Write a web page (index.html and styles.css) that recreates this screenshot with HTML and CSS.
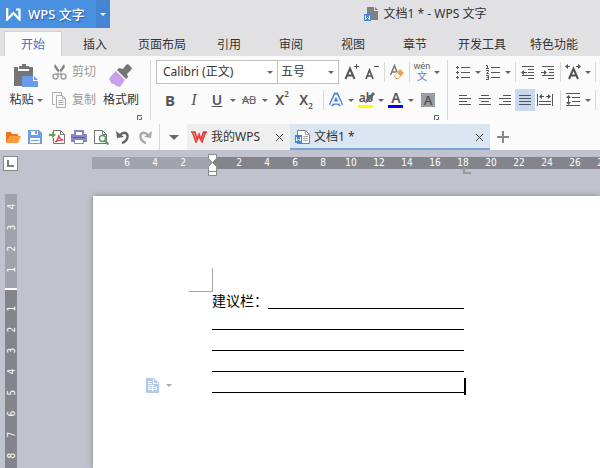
FILE: index.html
```html
<!DOCTYPE html>
<html lang="zh-CN">
<head>
<meta charset="utf-8">
<title>文档1 * - WPS 文字</title>
<link rel="stylesheet" href="styles.css">
</head>
<body>
<header class="titlebar">
  <div class="brand">
    <button class="brand-main" type="button">
      <svg width="15" height="13" viewBox="0 0 15 13"><path d="M1.200 0v11.500L7.500 5l6 6.500V1.500H10" fill="none" stroke="#fff" stroke-width="2.200"/></svg>
      <span>WPS 文字</span>
    </button>
    <button class="brand-drop" type="button" aria-label="菜单"><i class="arrow"></i></button>
  </div>
  <div class="caption">
    <svg width="14" height="14" viewBox="0 0 14 14"><path d="M3 0h7v4h4v9H3z" fill="#808080"/><path d="M11 0l3 3h-3z" fill="#808080"/><path d="M0 7h7v7H0z" fill="#3f86d8"/><path d="M1.500 8.500v4l2-2 2 2v-4" fill="none" stroke="#fff"/></svg>
    <span>文档1 * - WPS 文字</span>
  </div>
</header>

<nav class="tabs">
  <button class="tab active" type="button">开始</button>
  <button class="tab" type="button">插入</button>
  <button class="tab long" type="button">页面布局</button>
  <button class="tab" type="button">引用</button>
  <button class="tab" type="button">审阅</button>
  <button class="tab" type="button">视图</button>
  <button class="tab" type="button">章节</button>
  <button class="tab long" type="button">开发工具</button>
  <button class="tab long" type="button">特色功能</button>
</nav>

<section class="ribbon">
  <div class="group clipboard">
    <button class="big" type="button">
      <svg width="24" height="24" viewBox="0 0 24 24"><path d="M0 3h4v4h11V3h4v9H8v10H0z" fill="#757575"/><path d="M5 2h3V0h4v2h3v3H5z" fill="#757575"/><path d="M8 12h11v5h5v6H8z" fill="#6b9be8"/><path d="M20 12l4 4h-4z" fill="#6b9be8"/></svg>
      <span>粘贴 <i class="arrow"></i></span>
    </button>
    <div class="stack">
      <button class="small" type="button">
        <svg width="15" height="16" viewBox="0 0 15 16"><g fill="none" stroke="#a3a3a3" stroke-width="1.500"><circle cx="3.500" cy="12.500" r="2.500"/><circle cx="11.500" cy="12.500" r="2.500"/></g><path d="M3 0l7 10-2 1-6-8zM12 0L5 10l2 1 6-8z" fill="#858585"/></svg>
        <span>剪切</span>
      </button>
      <button class="small" type="button">
        <svg width="15" height="16" viewBox="0 0 15 16"><g fill="none" stroke="#adadad"><path d="M3 12.500H.5V.5h9V3"/><path d="M4.500 3.500h6l3 3v9h-9zM10.500 3.500v3h3M6.500 8.500h5M6.500 10.500h5M6.500 12.500h5"/></g></svg>
        <span>复制</span>
      </button>
    </div>
    <button class="big painter" type="button">
      <svg width="24" height="24" viewBox="0 0 24 24"><path d="M17 1l2-1 4 4-1 2-4 4 1 3-2 2L8 6l2-2 4 1z" fill="#757575"/><path d="M7 7l9 9-5 7-4-1-2-2-2 0-3-5 3-4z" fill="#c9a0ee"/></svg>
      <span>格式刷</span>
    </button>
    <button class="launcher" type="button" aria-label="剪贴板设置"><svg width="5" height="5" viewBox="0 0 5 5"><path d="M.5 5V.5H5M4.500 2v2.500H2" fill="none" stroke="#56668c"/></svg></button>
  </div>

  <div class="group font">
    <div class="row">
      <div class="combo family"><select aria-label="字体"><option>Calibri (正文)</option></select><i class="arrow"></i></div>
      <div class="combo size"><select aria-label="字号"><option>五号</option></select><i class="arrow"></i></div>
      <button class="tool" type="button" aria-label="增大字号"><svg width="16" height="16" viewBox="0 0 16 16"><path d="M1.500 15L6 4.500 10.500 15M3 11.500h6" fill="none" stroke="#555" stroke-width="2"/><path d="M10 2.500h5M12.500 0v5" stroke="#555"/></svg></button>
      <button class="tool" type="button" aria-label="减小字号"><svg width="16" height="16" viewBox="0 0 16 16"><path d="M2 15L5.500 6 9 15M3 12h5" fill="none" stroke="#555" stroke-width="1.700"/><path d="M10 2.500h5" stroke="#555"/></svg></button>
      <i class="sep"></i>
      <button class="tool" type="button" aria-label="清除格式"><svg width="16" height="16" viewBox="0 0 16 16"><path d="M1.500 11L5.500 1.500 8 8M3 8h4" fill="none" stroke="#777" stroke-width="1.500"/><path d="M11 5l4 4-6 6H7l-2-3z" fill="#f0a04b"/><path d="M8 9l3 3-2 2H7.500L6 12z" fill="#fff"/></svg></button>
      <i class="sep"></i>
      <button class="tool pinyin-guide" type="button" aria-label="拼音指南"><span class="pinyin">wén</span><span class="hanzi">文</span></button>
      <button class="drop" type="button" aria-label="拼音选项"><i class="arrow"></i></button>
    </div>
    <div class="row second">
      <button class="tool w24 bold" type="button">B</button>
      <button class="tool w24 italic" type="button">I</button>
      <button class="tool w22 underline" type="button">U</button>
      <button class="drop" type="button" aria-label="下划线选项"><i class="arrow"></i></button>
      <button class="tool w22 strike" type="button">AB</button>
      <button class="drop" type="button" aria-label="删除线选项"><i class="arrow"></i></button>
      <button class="tool w24 script" type="button">X<sup>2</sup></button>
      <button class="tool w24 script" type="button">X<sub>2</sub></button>
      <i class="sep wide"></i>
      <button class="tool" type="button" aria-label="文字效果"><svg width="16" height="16" viewBox="0 0 16 16"><path d="M3 13.500L7.500 3h1L13 13.500M5 10.500h6" fill="none" stroke="#4179d3" stroke-width="4.500"/><path d="M3 13L7.500 3.500h1L13 13M5 10.500h6" fill="none" stroke="#fff" stroke-width="1.800"/></svg></button>
      <button class="drop" type="button" aria-label="文字效果选项"><i class="arrow"></i></button>
      <button class="tool swatch yellow" type="button" aria-label="突出显示"><span>ab</span><svg class="pen" width="10" height="11" viewBox="0 0 10 11"><path d="M8 0l2 2-6 7-3 2H0l1-3z" fill="#666"/></svg></button>
      <button class="drop" type="button" aria-label="突出显示颜色"><i class="arrow"></i></button>
      <button class="tool swatch blue" type="button">A</button>
      <button class="drop" type="button" aria-label="字体颜色选项"><i class="arrow"></i></button>
      <button class="tool w24 shade" type="button"><span>A</span></button>
    </div>
    <button class="launcher" type="button" aria-label="字体设置"><svg width="5" height="5" viewBox="0 0 5 5"><path d="M.5 5V.5H5M4.500 2v2.500H2" fill="none" stroke="#56668c"/></svg></button>
  </div>

  <div class="group para">
    <div class="row">
      <button class="tool" type="button" aria-label="项目符号"><svg width="16" height="16" viewBox="0 0 16 16"><path d="M6 3.500h9M6 8.500h9M6 13.500h9M1 3.500h3M1 8.500h3M1 13.500h3M2.500 2v3M2.500 7v3M2.500 12v3" stroke="#555"/></svg></button>
      <button class="drop" type="button" aria-label="项目符号选项"><i class="arrow"></i></button>
      <button class="tool" type="button" aria-label="编号"><svg width="16" height="16" viewBox="0 0 16 16"><path d="M6 3.500h9M6 8.500h9M6 13.500h9M1 1.500h1.500V5M1 4.500h3M1 6.500h2.500v1L1.500 9.500H4M1 11.500h2.500v4H1M1.500 13.500h2" fill="none" stroke="#555"/></svg></button>
      <button class="drop" type="button" aria-label="编号选项"><i class="arrow"></i></button>
      <i class="sep"></i>
      <button class="tool" type="button" aria-label="减少缩进"><svg width="16" height="16" viewBox="0 0 16 16"><path d="M2 2.500h12M8 5.500h6M8 8.500h6M2 11.500h12M8 14.500h6M2 8.500h5" stroke="#555"/><path d="M1 8.500L4 6v5z" fill="#555"/></svg></button>
      <button class="tool" type="button" aria-label="增加缩进"><svg width="16" height="16" viewBox="0 0 16 16"><path d="M2 2.500h12M8 5.500h6M9 8.500h5M2 11.500h12M8 14.500h6M1 8.500h5" stroke="#555"/><path d="M7 8.500L4 6v5z" fill="#555"/></svg></button>
      <i class="sep"></i>
      <button class="tool" type="button" aria-label="字符缩放"><svg width="16" height="16" viewBox="0 0 16 16"><path d="M4 15L8.500 4.500 13 15M5.500 11.500h6" fill="none" stroke="#555" stroke-width="2"/><path d="M1 2.500h4M11 2.500h4" stroke="#555"/><path d="M0 2.500L3 0v5zM16 2.500L13 0v5z" fill="#555"/></svg></button>
      <button class="drop" type="button" aria-label="字符缩放选项"><i class="arrow"></i></button>
      <i class="sep"></i>
    </div>
    <div class="row second">
      <button class="tool" type="button" aria-label="左对齐"><svg width="12" height="12" viewBox="0 0 12 12"><path d="M0 1.500h8M0 4.500h12M0 7.500h8M0 10.500h12" stroke="#555"/></svg></button>
      <button class="tool" type="button" aria-label="居中"><svg width="12" height="12" viewBox="0 0 12 12"><path d="M2 1.500h8M0 4.500h12M2 7.500h8M0 10.500h12" stroke="#555"/></svg></button>
      <button class="tool" type="button" aria-label="右对齐"><svg width="12" height="12" viewBox="0 0 12 12"><path d="M4 1.500h8M0 4.500h12M4 7.500h8M0 10.500h12" stroke="#555"/></svg></button>
      <button class="tool on" type="button" aria-label="两端对齐"><svg width="12" height="12" viewBox="0 0 12 12"><path d="M0 1.500h12M0 4.500h12M0 7.500h12M0 10.500h12" stroke="#555"/></svg></button>
      <button class="tool" type="button" aria-label="分散对齐"><svg width="16" height="12" viewBox="0 0 16 12"><path d="M.5 0v12M15.500 0v12M3 2.500h10M2 7.500h12M2 10.500h12" stroke="#555"/><path d="M2 2.500L5 0v5zM14 2.500L11 0v5z" fill="#555"/><path d="M7 2.500h2" stroke="#fbfbfb"/></svg></button>
      <i class="sep push"></i>
      <button class="tool" type="button" aria-label="行距"><svg width="16" height="14" viewBox="0 0 16 14"><path d="M1 .5h14M7 4.500h8M7 8.500h8M1 12.500h14M3.500 4v6" stroke="#555"/><path d="M3.500 2L6 5H1zM3.500 12L6 9H1z" fill="#555"/></svg></button>
      <button class="drop" type="button" aria-label="行距选项"><i class="arrow"></i></button>
      <i class="sep"></i>
    </div>
  </div>
</section>

<div class="docbar">
  <div class="quick">
    <button type="button" aria-label="打开"><svg width="16" height="16" viewBox="0 0 16 16"><path d="M1 13V3h5l1 2h6v2H5L2 13z" fill="#e8761c"/><path d="M5 7h11l-3 7H1z" fill="#ff9a3c"/></svg></button>
    <button type="button" aria-label="保存"><svg width="16" height="16" viewBox="0 0 16 16"><path d="M1 1h11l3 3v11H1z" fill="#6c9fe6"/><path d="M4 2h7v4H4zM3 9h10v5H3z" fill="#fff"/><path d="M8 2h2v3H8z" fill="#6c9fe6"/><path d="M4 11.500h8" stroke="#6c9fe6"/></svg></button>
    <button type="button" aria-label="输出为PDF"><svg width="16" height="16" viewBox="0 0 16 16"><path d="M4.500 4V1.500h7l4 4v9h-11V9M11.500 1.500v4h4" fill="#fff" stroke="#777"/><path d="M0 5h3V2.500L7 6 3 9V7H0z" fill="#63a053"/><path d="M6 13c2-1 4-4 3.500-7 1 4 3 5 5 5-3 0-6 .5-8.500 2z" fill="none" stroke="#e0393e" stroke-width="1.200"/></svg></button>
    <button type="button" aria-label="打印"><svg width="16" height="16" viewBox="0 0 16 16"><path d="M3 1h10v4H3zM0 5h16v8H0z" fill="#8a84c8"/><path d="M5 3h6v3H5z" fill="#fff"/><path d="M2 8.500h12" stroke="#5d5798"/><path d="M3.500 10.500h9v4h-9z" fill="#fff" stroke="#8a84c8"/></svg></button>
    <button type="button" aria-label="打印预览"><svg width="16" height="16" viewBox="0 0 16 16"><path d="M1.500 1.500h8l4 4v9h-12zM9.500 1.500v4h4" fill="#fff" stroke="#777"/><circle cx="9.500" cy="9.500" r="3" fill="#fff" stroke="#57a05a" stroke-width="1.500"/><path d="M11.500 11.500l4 4" stroke="#57a05a" stroke-width="2"/></svg></button>
    <button type="button" aria-label="撤销"><svg width="16" height="16" viewBox="0 0 16 16"><path d="M5 6c4-4 8-2 7.500 2-.5 3-2.500 5-5.500 6" fill="none" stroke="#666" stroke-width="2.400"/><path d="M1 2l1 7 7-1z" fill="#666"/></svg></button>
    <button type="button" aria-label="恢复"><svg width="16" height="16" viewBox="0 0 16 16"><path d="M11 6C7 2 3 4 3.500 8c.5 3 2.500 5 5.500 6" fill="none" stroke="#aaa" stroke-width="2.400"/><path d="M15 2l-1 7-7-1z" fill="#aaa"/></svg></button>
  </div>
  <button class="more" type="button" aria-label="更多命令"><i class="arrow large"></i></button>
  <div class="doc home">
    <svg width="16" height="12" viewBox="0 0 16 12"><path d="M0 1.200h4l2 7 2-5 2 5 2.500-7H16M1.500 1l3.500 10 3-6 3 6L14.500 1" fill="none" stroke="#e64340" stroke-width="1.700"/></svg>
    <span>我的WPS</span>
    <button class="close" type="button" aria-label="关闭"><svg width="9" height="9" viewBox="0 0 9 9"><path d="M1 1l7 7M8 1L1 8" stroke="#444"/></svg></button>
  </div>
  <div class="doc current">
    <svg width="15" height="15" viewBox="0 0 15 15"><path d="M2.500.5h8l4 4v9h-12z" fill="#fff" stroke="#808080"/><path d="M10.500 1v3.500h4M8 6.500h5M8 8.500h5M8 10.500h5" fill="none" stroke="#aaa"/><path d="M0 5h7v8H0z" fill="#3f86d8"/><path d="M1.500 7v4l2-2 2 2V7" fill="none" stroke="#fff"/></svg>
    <span>文档1 *</span>
    <button class="close" type="button" aria-label="关闭"><svg width="9" height="9" viewBox="0 0 9 9"><path d="M1 1l7 7M8 1L1 8" stroke="#444"/></svg></button>
  </div>
  <button class="add" type="button" aria-label="新建"><svg width="12" height="12" viewBox="0 0 12 12"><path d="M0 6h12M6 0v12" stroke="#888" stroke-width="2"/></svg></button>
</div>

<main class="work">
  <div class="top">
    <button class="corner" type="button" aria-label="制表符"><svg width="7" height="7" viewBox="0 0 7 7"><path d="M1 0v6h6" fill="none" stroke="#808080" stroke-width="2"/></svg></button>
    <div class="hruler">
      <div class="margin-part"><span>6</span><span>4</span><span>2</span></div>
      <div class="body-part">
        <svg class="indent" width="9" height="22" viewBox="0 0 9 22"><path d="M.5.5h8v4l-4 4-4-4z" fill="#fff" stroke="#888"/><path d="M4.500 8.500l4 4v9h-8v-9z" fill="#fff" stroke="#888"/><path d="M1 17.500h7" stroke="#888"/></svg>
        <span>2</span><span>4</span><span>6</span><span>8</span><span>10</span><span>12</span><span>14</span><span>16</span><span class="stop">18</span><span>20</span><span>22</span><span>24</span><span>26</span><span>28</span>
      </div>
    </div>
  </div>
  <div class="canvas">
    <div class="vruler">
      <div class="margin-part"><span>4</span><span>3</span><span>2</span><span>1</span></div>
      <div class="body-part"><span>1</span><span>2</span><span>3</span><span>4</span><span>5</span><span>6</span><span>7</span><span>8</span></div>
    </div>
    <article class="page">
      <div class="crop"></div>
      <div class="lines">
        <p><span>建议栏：</span><u></u></p>
        <p><u></u></p>
        <p><u></u></p>
        <p><u></u></p>
        <p><u></u><i class="caret"></i>
          <button class="options" type="button" aria-label="粘贴选项"><svg width="13" height="15" viewBox="0 0 13 15"><path d="M0 0h8l5 5v10H0z" fill="#b4caea"/><path d="M7.500 1v4.500H12M2 3.500h4M2 5.500h4M2 7.500h6M2.500 9.500h8v2h-8zM6.500 8v5" fill="none" stroke="#fff"/></svg><i class="arrow"></i></button>
        </p>
      </div>
    </article>
  </div>
</main>
</body>
</html>
```

FILE: styles.css
```css
* { box-sizing: border-box; }

body {
  margin: 0;
  height: 100vh;
  display: flex;
  flex-direction: column;
  overflow: hidden;
  background: #e1e1e4;
  color: #333;
  font: 12px/16px "Noto Sans", "Noto Sans CJK SC", sans-serif;
}

button {
  margin: 0;
  padding: 0;
  border: 0;
  background: none;
  color: inherit;
  font: inherit;
  white-space: nowrap;
}

svg { display: block; flex: none; }

.arrow {
  display: inline-block;
  flex: none;
  border: 3px solid transparent;
  border-top-color: #666;
  border-bottom: 0;
}
.arrow.large { border-width: 5px 5px 0; }

/* Title bar */
.titlebar { display: flex; height: 28px; flex: none; }
.brand { display: flex; width: 110px; background: #4a90e0; color: #fff; }
.brand-main {
  display: flex;
  align-items: center;
  gap: 7px;
  width: 96px;
  padding-left: 6px;
  font-size: 13px;
  font-weight: 500;
  text-shadow: 1px 1px 1px #2a5f9e;
}
.brand-drop { flex: 1; background: #4384d3; }
.brand-drop .arrow { border-top-color: #fff; vertical-align: middle; }
.caption {
  flex: 1;
  display: flex;
  align-items: center;
  justify-content: center;
  gap: 6px;
  padding-left: 140px;
}

/* Ribbon tabs */
.tabs { display: flex; height: 28px; flex: none; padding: 3px 0 0 2px; }
.tab { width: 62px; padding-top: 2px; }
.tab.long { width: 72px; }
.tab.active {
  width: 58px;
  margin: 0 2px;
  background: #fbfbfb;
  border: 1px solid #d2d2d5;
  border-bottom: 0;
  color: #3a74c4;
}

/* Ribbon */
.ribbon { display: flex; height: 68px; flex: none; padding-top: 4px; background: #fbfbfb; }
.group { position: relative; height: 60px; flex: none; }
.launcher { position: absolute; right: 8px; bottom: 0; }

.clipboard { display: flex; width: 151px; border-right: 1px solid #d8d8d8; }
.big {
  display: flex;
  flex-direction: column;
  align-items: center;
  gap: 4px;
  width: 52px;
  padding-top: 4px;
}
.big.painter { width: 46px; }
.big .arrow { vertical-align: middle; }
.stack { display: flex; flex-direction: column; gap: 12px; width: 46px; padding-top: 4px; }
.small { display: flex; gap: 5px; color: #999; }

.row { display: flex; align-items: center; height: 24px; }
.row.second { margin-top: 4px; }
.tool {
  display: flex;
  align-items: center;
  justify-content: center;
  width: 20px;
  height: 22px;
  flex: none;
  color: #555;
}
.w22 { width: 22px; }
.w24 { width: 24px; }
.drop { display: flex; align-items: center; justify-content: center; width: 10px; height: 22px; }
.sep { width: 1px; height: 20px; margin: 0 2px; background: #d8d8d8; }
.sep.wide { margin-left: 5px; }
.sep.push { margin-left: auto; }

.font { width: 297px; padding-left: 5px; border-right: 1px solid #d8d8d8; }
.font .second { padding-left: 2px; }
.combo { position: relative; height: 24px; border: 1px solid #bfbfbf; }
.combo select {
  appearance: none;
  width: 100%;
  height: 22px;
  padding: 0 6px;
  border: 0;
  background: #fff;
  color: #333;
  font: inherit;
}
.combo .arrow { position: absolute; right: 4px; top: 10px; pointer-events: none; }
.family { width: 122px; }
.size { width: 61px; border-left: 0; margin-right: 3px; }
.size select { padding: 0 3px; }

.pinyin-guide { flex-direction: column; font-family: "Liberation Sans", "Noto Sans CJK SC", sans-serif; }
.pinyin { font-size: 9px; line-height: 10px; }
.hanzi { font-size: 10px; line-height: 12px; color: #4a82d6; }
.bold { font-size: 15px; font-weight: 700; }
.italic { font: italic 16px "Liberation Serif", serif; }
.underline { font-size: 14px; font-weight: 600; text-decoration: underline; }
.strike { font-size: 11px; text-decoration: line-through #d9534f; }
.script { font-size: 14px; font-weight: 600; }
.script sup, .script sub { font-size: 8px; line-height: 10px; }
.script sup { align-self: flex-start; }
.script sub { align-self: flex-end; }
.swatch { position: relative; font-size: 14px; font-weight: 600; line-height: 14px; padding-bottom: 5px; }
.swatch::after { content: ""; position: absolute; left: 2px; right: 3px; bottom: 3px; height: 3px; }
.yellow { font-size: 12px; }
.yellow::after { background: #ff0; }
.blue::after { background: #00f; }
.pen { position: absolute; right: 1px; top: 3px; }
.shade span { width: 14px; background: #9b9ea6; font-size: 13px; font-weight: 600; line-height: 14px; }

.para { padding-left: 5px; }
.para .second { padding-left: 2px; }
.tool.on { background: #c7d8f0; }

/* Document tab bar */
.docbar { display: flex; height: 26px; flex: none; background: #fbfbfb; }
.quick { display: flex; align-items: center; gap: 6px; width: 160px; padding-left: 5px; border-right: 1px solid #d8d8d8; }
.more { display: flex; align-items: center; justify-content: center; width: 27px; }
.doc { display: flex; align-items: center; gap: 4px; }
.close { margin-left: auto; }
.home { width: 103px; padding: 0 6px 0 4px; background: #efefef; }
.current { width: 200px; padding: 0 6px 0 5px; background: #dce6f2; box-shadow: inset 0 -2px #7aa3d8; }
.add { display: flex; align-items: center; padding-left: 7px; }

/* Workspace */
.work { flex: 1; min-height: 0; display: flex; flex-direction: column; background: #c0c3cd; }
.top { display: flex; align-items: flex-start; gap: 74px; padding: 6px 0 0 3px; height: 44px; flex: none; }
.corner {
  display: flex;
  align-items: center;
  justify-content: center;
  width: 15px;
  height: 15px;
  flex: none;
  background: #fff;
  border: 1px solid #888;
}
.hruler, .vruler { color: #fff; font: 10px/12px "DejaVu Sans Condensed", "DejaVu Sans", sans-serif; text-align: center; }
.hruler { flex: 1; min-width: 0; display: flex; height: 12px; margin-top: 1px; }
.hruler span { width: 28px; flex: none; }
.margin-part { background: #a0a2ac; }
.body-part { background: #83848c; }
.hruler .margin-part { display: flex; justify-content: flex-end; width: 120px; flex: none; padding-right: 15px; }
.hruler .body-part { position: relative; display: flex; flex: 1; min-width: 0; padding-left: 13px; }
.indent { position: absolute; left: -4px; top: -3px; }
.stop { position: relative; }
.stop::after {
  content: "";
  position: absolute;
  left: 14px;
  top: 10px;
  width: 6px;
  height: 5px;
  border: solid #999;
  border-width: 0 0 2px 2px;
}

.canvas { flex: 1; min-height: 0; display: flex; gap: 76px; padding-left: 5px; }
.vruler { display: flex; flex-direction: column; width: 12px; flex: none; overflow: hidden; }
.vruler span { display: block; height: 21px; line-height: 21px; transform: rotate(-90deg); }
.vruler .margin-part { padding: 2px 0 8px; border-bottom: 2px solid #fff; }
.vruler .body-part { flex: 1; padding-top: 8px; }

.page { flex: 1; margin-top: 2px; padding-left: 96px; background: #fff; box-shadow: 0 0 6px #85878f; }
.crop { width: 24px; height: 24px; margin-top: 72px; border: solid #a6a6a6; border-width: 0 1px 1px 0; }
.lines { width: 275px; padding-left: 23px; color: #000; font-size: 14px; line-height: 20px; }
.lines p { position: relative; display: flex; height: 21px; margin: 0; }
.lines p:first-child { height: 17px; line-height: 18px; }
.lines span { width: 56px; white-space: nowrap; }
.lines u { flex: 1; border-bottom: 1px solid #000; }
.caret { position: absolute; right: -2px; bottom: -2px; width: 2px; height: 17px; background: #000; }
.options { position: absolute; left: -66px; bottom: 0; display: flex; align-items: center; gap: 7px; }
.options .arrow { border-top-color: #aaa; }
```
